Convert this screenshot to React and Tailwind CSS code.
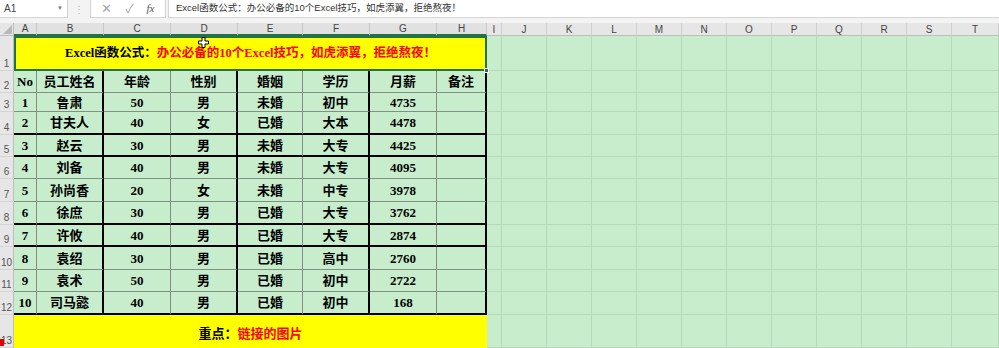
import React from 'react';

const colLetters = ['A', 'B', 'C', 'D', 'E', 'F', 'G', 'H', 'I', 'J', 'K', 'L', 'M', 'N', 'O', 'P', 'Q', 'R', 'S', 'T'];

const rows = [
    ['No', '员工姓名', '年龄', '性别', '婚姻', '学历', '月薪', '备注'],
    [1, '鲁肃', 50, '男', '未婚', '初中', 4735, ''],
    [2, '甘夫人', 40, '女', '已婚', '大本', 4478, ''],
    [3, '赵云', 30, '男', '未婚', '大专', 4425, ''],
    [4, '刘备', 40, '男', '未婚', '大专', 4095, ''],
    [5, '孙尚香', 20, '女', '未婚', '中专', 3978, ''],
    [6, '徐庶', 30, '男', '已婚', '大专', 3762, ''],
    [7, '许攸', 40, '男', '已婚', '大专', 2874, ''],
    [8, '袁绍', 30, '男', '已婚', '高中', 2760, ''],
    [9, '袁术', 50, '男', '已婚', '初中', 2722, ''],
    [10, '司马懿', 40, '男', '已婚', '初中', 168, ''],
];

// rows whose bottom edge is a heavy black line
const thickBottom = [4, 5, 8, 9, 12];

const serif = "font-['Liberation_Serif','Noto_Sans_CJK_SC',serif]";

function RowHead({ n, red }) {
    return (
        <div className="relative bg-[#e6e6e6] border-r border-r-[#bdbdbd] border-b border-b-[#d4d4d4] flex items-end justify-center pb-[1px] text-[10px] leading-none text-[#555] font-['Liberation_Sans',sans-serif]">
            {red && <span className="absolute left-0 bottom-[1px] w-[4px] h-[7px] bg-[#e00000]" />}
            {n}
        </div>
    );
}

function Empty({ count }) {
    return Array.from({ length: count }).map((_, i) => (
        <div key={i} className="border-r border-b border-[#b7d8bb]" />
    ));
}

function FormulaBar() {
    return (
        <div className="h-[23px] bg-[#f3f3f3] flex items-start text-[#444] font-['Liberation_Sans','Noto_Sans_CJK_SC',sans-serif]">
            <div className="w-[68px] h-[18px] bg-white border-r border-b border-[#d4d4d4] flex items-center justify-between pl-[4px] pr-[4px]">
                <span className="text-[10px]">A1</span>
                <span className="text-[6px] text-[#777]">▼</span>
            </div>
            <div className="w-[22px] h-[18px] flex items-center justify-center text-[10px] text-[#b0b0b0]">⋮</div>
            <div className="w-[76px] h-[18px] bg-white border-x border-b border-[#d4d4d4] flex items-center justify-around px-[4px]">
                <span className="text-[13px] text-[#a8a8a8] leading-none">✕</span>
                <span className="text-[12px] text-[#a8a8a8] leading-none">✓</span>
                <span className="text-[11px] italic text-[#555] font-['Liberation_Serif',serif] leading-none">fx</span>
            </div>
            <div className="ml-[2px] flex-1 h-[18px] bg-white border-l border-b border-[#d4d4d4] flex items-center pl-[7px] text-[9.5px] text-[#333]">
                Excel函数公式：办公必备的10个Excel技巧，如虎添翼，拒绝熬夜！
            </div>
        </div>
    );
}

export default function App() {
    return (
        <div className="relative w-[999px] h-[348px] overflow-hidden bg-[#c7edcc]">
            <FormulaBar />

            <div className="grid grid-cols-[14px_23px_67px_67px_67px_65px_67px_67px_50px_15px_repeat(10,45px)_1fr] grid-rows-[13px_35px_22px_19px_23px_22px_22px_23px_23px_22px_23px_22px_23px_33px]">
                {/* corner */}
                <div className="relative bg-[#e6e6e6] border-r border-b border-[#bdbdbd]">
                    <span className="absolute right-[1px] bottom-[1px] w-0 h-0 border-l-[9px] border-l-transparent border-b-[9px] border-b-[#b8b8b8]" />
                </div>
                {colLetters.map((c, i) => (
                    <div
                        key={c}
                        className={
                            i < 8
                                ? 'bg-[#e1e1e1] border-r border-r-[#c8c8c8] border-b-2 border-b-[#217346] flex items-center justify-center text-[10px] text-[#444] font-[\'Liberation_Sans\',sans-serif]'
                                : 'bg-[#e6e6e6] border-r border-r-[#cfcfcf] border-b border-b-[#bdbdbd] flex items-center justify-center text-[10px] text-[#444] font-[\'Liberation_Sans\',sans-serif]'
                        }
                    >
                        {c}
                    </div>
                ))}

                {/* row 1: merged title */}
                <RowHead n={1} />
                <div className={`relative col-span-8 bg-[#ffff00] border-2 border-[#217346] flex items-center justify-center text-[12.5px] font-bold ${serif}`}>
                    <span className="text-black">Excel函数公式：</span>
                    <span className="text-[#ff0000]">办公必备的10个Excel技巧，如虎添翼，拒绝熬夜！</span>
                    <span className="absolute -right-[4px] -bottom-[4px] w-[5px] h-[5px] bg-[#217346] border border-white" />
                </div>
                <Empty count={12} />

                {/* rows 2-12: table */}
                {rows.map((r, ri) => {
                    const rowNo = ri + 2;
                    const thick = thickBottom.includes(rowNo);
                    return (
                        <React.Fragment key={rowNo}>
                            <RowHead n={rowNo} />
                            {r.map((v, ci) => {
                                const right = ci % 2 === 1
                                    ? 'border-r-2 border-r-black'
                                    : 'border-r border-r-[#7f9282]';
                                const bottom = thick
                                    ? 'border-b-2 border-b-black'
                                    : 'border-b border-b-[#7f9282]';
                                return (
                                    <div
                                        key={ci}
                                        className={`${right} ${bottom} flex items-center justify-center text-[13px] font-bold text-black leading-none ${serif}`}
                                    >
                                        {v}
                                    </div>
                                );
                            })}
                            <Empty count={12} />
                        </React.Fragment>
                    );
                })}

                {/* row 13: merged note */}
                <RowHead n={13} red />
                <div className={`col-span-8 bg-[#ffff00] flex items-start justify-center pt-[9px] text-[13px] font-bold ${serif}`}>
                    <span className="text-black">重点：</span>
                    <span className="text-[#ff0000]">链接的图片</span>
                </div>
                <Empty count={12} />
            </div>

            {/* cell cursor */}
            <svg className="absolute left-[198px] top-[37px]" width="11" height="11" viewBox="0 0 11 11">
                <path d="M4 0.5h3v3.5h3.5v3h-3.5v3.5h-3v-3.5h-3.5v-3h3.5z" fill="#fff" stroke="#000" strokeWidth="1" />
            </svg>
        </div>
    );
}
